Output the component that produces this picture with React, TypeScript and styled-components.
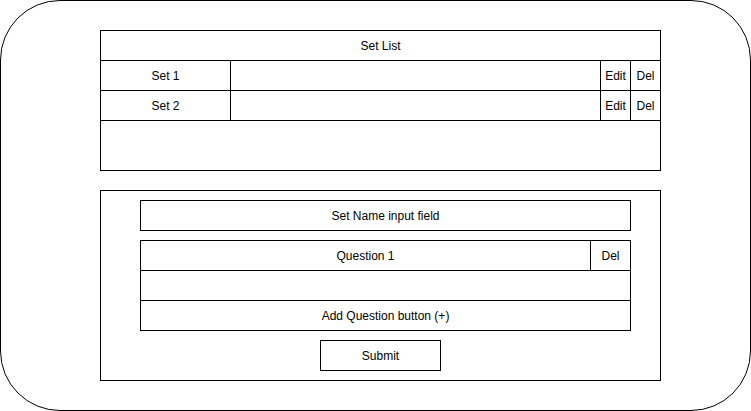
import React from 'react'
import styled, { createGlobalStyle } from 'styled-components'

const GlobalStyle = createGlobalStyle`
  html, body {
    margin: 0;
    padding: 0;
    background: #ffffff;
  }
  body {
    font-family: "Liberation Sans", Arial, sans-serif;
    font-size: 12px;
    color: #000000;
  }
`

const Frame = styled.div`
  box-sizing: border-box;
  width: 751px;
  height: 411px;
  border: 1px solid #000;
  border-radius: 60px;
  padding: 29px 0 0 99px;
  display: flex;
  flex-direction: column;
  gap: 19px;
`

const Table = styled.div<{ $cols: string; $rows: string }>`
  display: grid;
  grid-template-columns: ${p => p.$cols};
  grid-template-rows: ${p => p.$rows};
  gap: 1px;
  background: #000;
  border: 1px solid #000;
  width: fit-content;
`

const Cell = styled.div<{ $span?: boolean }>`
  background: #fff;
  display: flex;
  align-items: center;
  justify-content: center;
  line-height: 14px;
  ${p => (p.$span ? 'grid-column: 1 / -1;' : '')}
`

const Panel = styled.div`
  box-sizing: border-box;
  width: 561px;
  height: 191px;
  border: 1px solid #000;
  padding: 9px 0 0 39px;
  display: flex;
  flex-direction: column;
  align-items: flex-start;
  gap: 9px;
`

const Field = styled.div`
  box-sizing: border-box;
  width: 491px;
  height: 31px;
  border: 1px solid #000;
  display: flex;
  align-items: center;
  justify-content: center;
`

const SubmitButton = styled.div`
  box-sizing: border-box;
  width: 121px;
  height: 31px;
  border: 1px solid #000;
  display: flex;
  align-items: center;
  justify-content: center;
  margin-left: 180px;
`

const sets = ['Set 1', 'Set 2']

const App: React.FC = () => {
  return (
    <>
      <GlobalStyle />
      <Frame>
        <Table $cols="129px 369px 29px 29px" $rows="29px 29px 29px 49px">
          <Cell $span>Set List</Cell>
          {sets.map(name => (
            <React.Fragment key={name}>
              <Cell>{name}</Cell>
              <Cell />
              <Cell>Edit</Cell>
              <Cell>Del</Cell>
            </React.Fragment>
          ))}
          <Cell $span />
        </Table>
        <Panel>
          <Field>Set Name input field</Field>
          <Table $cols="449px 39px" $rows="29px 29px 29px">
            <Cell>Question 1</Cell>
            <Cell>Del</Cell>
            <Cell $span />
            <Cell $span>Add Question button (+)</Cell>
          </Table>
          <SubmitButton>Submit</SubmitButton>
        </Panel>
      </Frame>
    </>
  )
}

export default App
